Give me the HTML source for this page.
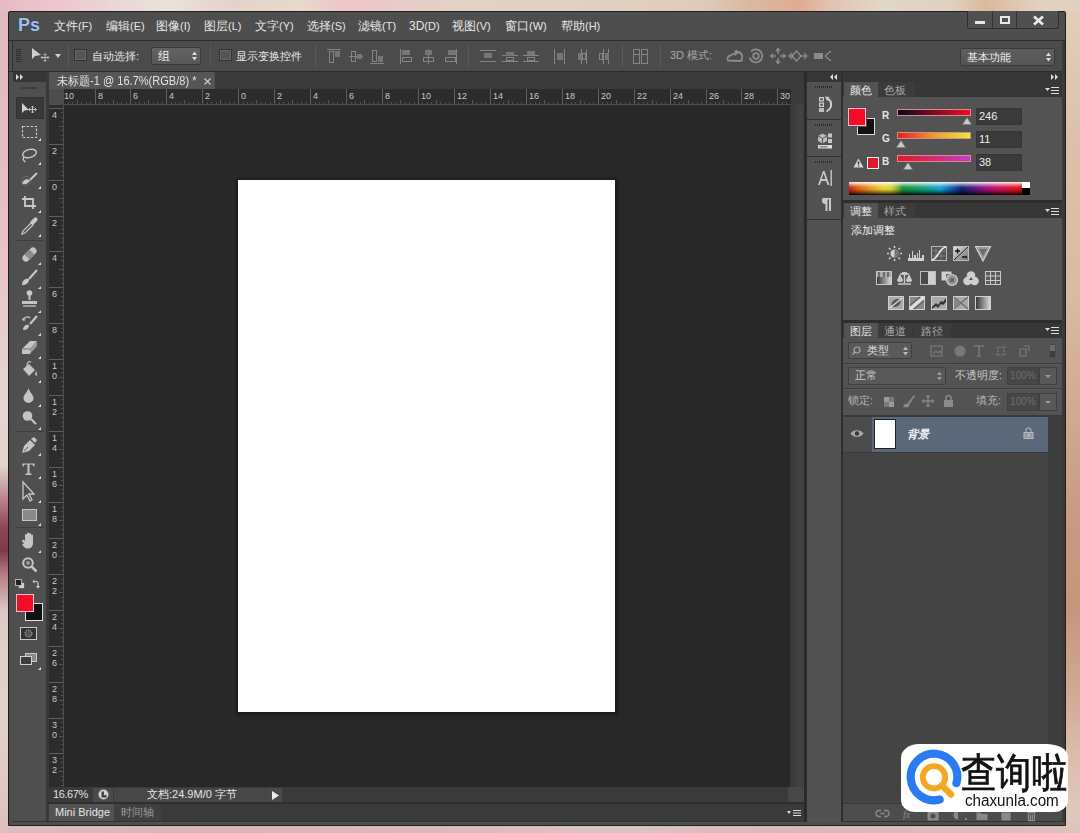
<!DOCTYPE html>
<html><head><meta charset="utf-8">
<style>
*{margin:0;padding:0;box-sizing:border-box}
html,body{width:1080px;height:833px;overflow:hidden}
body{position:relative;font-family:"Liberation Sans",sans-serif;font-size:11px;color:#ddd;
background:linear-gradient(90deg,#e6bcc4 0px,#efc6cf 60px,#e9d6d6 110px,#ece2da 170px,#e5d2cb 230px,#e6dacb 300px,#eec4ca 350px,#e9ccc8 400px,#e2d3c6 470px,#e1d0c2 600px,#dfcbbb 700px,#d9b9a2 750px,#e0ab93 800px,#e2c3b2 830px,#e2d6c6 880px,#e0d2c2 950px,#dcb99b 985px,#e2d2c2 1040px,#e0d0c0 1080px)}
.a{position:absolute}
.t{position:absolute;white-space:nowrap;line-height:1}
svg{position:absolute;overflow:visible}
#win{left:8px;top:11px;width:1058px;height:815px;background:#4e4e4e;border:1px solid #1f1f1f;border-radius:2px 2px 0 0}
.menu{top:20px;font-size:12px;color:#e6e6e6}
.sep{position:absolute;width:1px;background:#383838;border-right:1px solid #5a5a5a}
#hr i{position:absolute;width:1px;background:#5e5e5e}
#hr b{position:absolute;top:3px;font-weight:normal;font-size:9px;color:#c8c8c8;line-height:9px}
#vr i{position:absolute;height:1px;background:#5e5e5e}
#vr b{position:absolute;left:2px;font-weight:normal;font-size:9px;color:#c8c8c8;line-height:10px;text-align:center;width:7px}
.tool{position:absolute;left:21px;width:16px;height:16px}
.corner{position:absolute;width:0;height:0;border-left:3px solid transparent;border-bottom:3px solid #cfcfcf}
.grip{position:absolute;height:2px;background:repeating-linear-gradient(90deg,#2e2e2e 0 1px,transparent 1px 2px)}
.ptab{position:absolute;height:15px;font-size:12px;line-height:15px;text-align:center;color:#bdbdbd}
.pmenu{position:absolute;width:14px;height:8px}
.inp{position:absolute;background:#3a3a3a;border:1px solid #353535}
</style></head><body>
<div class="a" style="left:0;top:11px;width:8px;height:822px;background:linear-gradient(180deg,#e4b9c1 0px,#e6bcc3 140px,#e8c3c8 260px,#e6cfcf 330px,#e4d6d0 400px,#e2d4cc 455px,#b88088 490px,#8e4856 515px,#7e3a48 540px,#b27a80 562px,#dcc8c4 600px,#e0d0c8 640px,#e2d2ca 700px,#e0c8c2 780px,#dcbcbc 833px)"></div>
<div class="a" style="left:1066px;top:11px;width:14px;height:822px;background:linear-gradient(180deg,#e2cebb 0px,#dcc2aa 120px,#d9bba3 280px,#d0aa92 400px,#c69a80 520px,#c6967c 600px,#d2ac96 690px,#dbbca8 740px,#e0c8bf 800px,#ddc0b8 833px)"></div>
<div class="a" style="left:8px;top:826px;width:1058px;height:7px;background:linear-gradient(90deg,#dcbcbc 0px,#d9b5b5 200px,#dcb8b8 400px,#dcc4c4 600px,#d8b8b8 800px,#dcc0bc 1058px)"></div>
<div id="win" class="a"></div>

<!-- menu bar -->
<div class="a" style="left:9px;top:40px;width:1056px;height:1px;background:#2c2c2c"></div>
<div class="t" style="left:18px;top:16px;font-size:18px;font-weight:bold;color:#a3bfe3;text-shadow:0 0 1.5px #23406a,0 0 1px #23406a">Ps</div>
<div class="t menu" style="left:54px">文件<span style="font-size:11px">(F)</span></div>
<div class="t menu" style="left:106px">编辑<span style="font-size:11px">(E)</span></div>
<div class="t menu" style="left:156px">图像<span style="font-size:11px">(I)</span></div>
<div class="t menu" style="left:204px">图层<span style="font-size:11px">(L)</span></div>
<div class="t menu" style="left:255px">文字<span style="font-size:11px">(Y)</span></div>
<div class="t menu" style="left:307px">选择<span style="font-size:11px">(S)</span></div>
<div class="t menu" style="left:358px">滤镜<span style="font-size:11px">(T)</span></div>
<div class="t menu" style="left:409px">3D<span style="font-size:11px">(D)</span></div>
<div class="t menu" style="left:452px">视图<span style="font-size:11px">(V)</span></div>
<div class="t menu" style="left:505px">窗口<span style="font-size:11px">(W)</span></div>
<div class="t menu" style="left:561px">帮助<span style="font-size:11px">(H)</span></div>

<!-- window buttons -->
<div class="a" style="left:967px;top:11px;width:92px;height:18px;background:#505050;border:1px solid #2e2e2e;border-top:none;border-radius:0 0 3px 3px"></div>
<div class="a" style="left:992px;top:11px;width:1px;height:17px;background:#333"></div>
<div class="a" style="left:1016px;top:11px;width:1px;height:17px;background:#333"></div>
<div class="a" style="left:975px;top:21px;width:10px;height:3px;background:#e8e8e8"></div>
<div class="a" style="left:1000px;top:16px;width:10px;height:8px;border:2px solid #e8e8e8;border-top-width:2px"></div>
<svg style="left:1033px;top:16px" width="11" height="9"><path d="M1 0.5L10 8.5M10 0.5L1 8.5" stroke="#eaeaea" stroke-width="2.6"/></svg>

<!-- options bar -->
<div class="a" style="left:12px;top:41px;width:1051px;height:30px;background:#4b4b4b;border-left:1px solid #333"></div>
<div class="a" style="left:9px;top:71px;width:1056px;height:1px;background:#2a2a2a"></div>
<div class="a" style="left:16px;top:49px;width:5px;height:14px;background:repeating-linear-gradient(180deg,#303030 0 1px,transparent 1px 2px)"></div>
<svg style="left:31px;top:47px" width="20" height="18">
<path d="M1 1 L1 12 L4 9 L10 8 Z" fill="#cfcfcf"/>
<path d="M10.5 10.5h7M14 7v7" stroke="#bdbdbd" stroke-width="1"/><path d="M12.5 8l1.5-1.5 1.5 1.5M12.5 13l1.5 1.5 1.5-1.5M11.5 9l-1.5 1.5 1.5 1.5M16.5 9l1.5 1.5-1.5 1.5" stroke="#bdbdbd" stroke-width="0.9" fill="none"/>
</svg>
<svg style="left:55px;top:54px" width="7" height="5"><path d="M0 0h6l-3 4z" fill="#d0d0d0"/></svg>
<div class="sep" style="left:68px;top:45px;height:21px"></div>
<div class="a" style="left:74px;top:49px;width:13px;height:12px;background:#555;border:1px solid #333;box-shadow:inset 0 0 0 1px #666"></div>
<div class="t" style="left:92px;top:51px;color:#e6e6e6">自动选择:</div>
<div class="a" style="left:151px;top:47px;width:50px;height:18px;background:linear-gradient(#636363,#575757);border:1px solid #3a3a3a;border-radius:2px"></div>
<div class="t" style="left:158px;top:50px;font-size:12px;color:#f0f0f0">组</div>
<svg style="left:192px;top:51px" width="5" height="10"><path d="M0 4l2.5-3.5L5 4zM0 6l2.5 3.5L5 6z" fill="#ddd"/></svg>
<div class="sep" style="left:210px;top:45px;height:21px"></div>
<div class="a" style="left:219px;top:49px;width:13px;height:12px;background:#555;border:1px solid #333;box-shadow:inset 0 0 0 1px #666"></div>
<div class="t" style="left:236px;top:51px;color:#e6e6e6">显示变换控件</div>
<div class="sep" style="left:315px;top:45px;height:21px"></div>

<svg style="left:327px;top:49px" width="320" height="15" fill="none" stroke="#858585" stroke-width="1">
<!-- align top/vcenter/bottom -->
<g><path d="M0 0.5h14"/><rect x="2.5" y="2.5" width="4" height="11"/><rect x="8" y="2" width="5" height="6" fill="#767676" stroke="none"/></g>
<g transform="translate(22,0)"><path d="M0 7.5h14"/><rect x="2.5" y="2.5" width="4" height="10"/><rect x="8" y="5" width="5" height="5" fill="#767676" stroke="none"/></g>
<g transform="translate(43,0)"><path d="M0 14.5h14"/><rect x="2.5" y="1.5" width="4" height="11"/><rect x="8" y="7" width="5" height="6" fill="#767676" stroke="none"/></g>
<g transform="translate(73,0)"><path d="M0.5 0v15"/><rect x="2" y="1" width="8" height="5" fill="#767676" stroke="none"/><rect x="2.5" y="8.5" width="9" height="4"/></g>
<g transform="translate(95,0)"><path d="M6.5 0v15"/><rect x="3" y="1" width="7" height="5" fill="#767676" stroke="none"/><rect x="1.5" y="8.5" width="10" height="4"/></g>
<g transform="translate(117,0)"><path d="M12.5 0v15"/><rect x="4" y="1" width="8" height="5" fill="#767676" stroke="none"/><rect x="1.5" y="8.5" width="10" height="4"/></g>
</svg>
<div class="sep" style="left:468px;top:45px;height:21px"></div>
<svg style="left:480px;top:49px" width="180" height="15" fill="none" stroke="#858585" stroke-width="1">
<g><path d="M0 1.5h16M0 12.5h16"/><rect x="4" y="4" width="8" height="5" fill="#767676" stroke="none"/></g>
<g transform="translate(22,0)"><path d="M0 6.5h16M0 12.5h16"/><rect x="4" y="3" width="8" height="4" fill="#767676" stroke="none"/><rect x="4.5" y="8.5" width="7" height="3"/></g>
<g transform="translate(43,0)"><path d="M0 12.5h16M0 6.5h16"/><rect x="4" y="2" width="8" height="4" fill="#767676" stroke="none"/><rect x="4.5" y="8.5" width="7" height="3"/></g>
<g transform="translate(74,0)"><path d="M0.5 0v15M10.5 0v15"/><rect x="3" y="4" width="6" height="7" fill="#767676" stroke="none"/></g>
<g transform="translate(96,0)"><path d="M5.5 0v15M10.5 1v14"/><rect x="2" y="4" width="4" height="7" fill="#767676" stroke="none"/><rect x="6.5" y="4.5" width="3" height="6"/></g>
<g transform="translate(118,0)"><path d="M5.5 0v15M10.5 0v15"/><rect x="7" y="4" width="4" height="7" fill="#767676" stroke="none"/><rect x="1.5" y="4.5" width="3" height="6"/></g>
<g transform="translate(153,0)"><rect x="0.5" y="0.5" width="6" height="14"/><rect x="8.5" y="0.5" width="6" height="14"/><path d="M0 5.5h7M8 5.5h7"/></g>
</svg>
<div class="sep" style="left:622px;top:45px;height:21px"></div>
<div class="sep" style="left:660px;top:45px;height:21px"></div>
<div class="t" style="left:670px;top:50px;font-size:11px;color:#a8a8a8">3D 模式:</div>
<svg style="left:726px;top:47px" width="110" height="18" fill="none" stroke="#8c8c8c" stroke-width="1.8">
<path d="M2 13.5c-1.5-2 0-5 3-5c1-1.5 3-2 4.5-1c1-3 5-3 6 0c1 1 1 3 0 4c1 1 0.5 2.5-1 2.5z"/><circle cx="10.5" cy="5" r="2" fill="#8c8c8c" stroke="none"/>
<path d="M25 4.5a6.5 6.5 0 1 1-1.5 6"/><circle cx="30" cy="9" r="2.8"/>
<path d="M52 2v5M52 11v5M45 9h5M54 9h5" stroke-width="1.5"/><path d="M50 4l2-2.5 2 2.5M50 14l2 2.5 2-2.5M47 7l-2.5 2 2.5 2M57 7l2.5 2-2.5 2" stroke-width="1.3"/>
<path d="M66 9l4.5-5 4.5 5-4.5 5zM63 9h3M75 9h6" stroke-width="1.5"/><path d="M66 6l-3 3 3 3M78 6l3 3-3 3" stroke-width="1.2"/>
<rect x="88" y="6" width="9" height="6" fill="#8c8c8c" stroke="none"/><path d="M99 9l6-5M99 9l6 5" stroke-width="1.5"/>
</svg>
<div class="a" style="left:960px;top:48px;width:95px;height:18px;background:linear-gradient(#5d5d5d,#555);border:1px solid #3a3a3a;border-radius:2px"></div>
<div class="t" style="left:967px;top:52px;color:#eee">基本功能</div>
<svg style="left:1046px;top:52px" width="5" height="10"><path d="M0 4l2.5-3.5L5 4zM0 6l2.5 3.5L5 6z" fill="#ddd"/></svg>

<!-- collapse strips -->
<div class="a" style="left:13px;top:72px;width:33px;height:10px;background:#363636"></div>
<svg style="left:16px;top:74px" width="8" height="6"><path d="M0 0l3 3-3 3zM4 0l3 3-3 3z" fill="#ddd"/></svg>
<div class="a" style="left:807px;top:72px;width:256px;height:10px;background:#363636"></div>
<svg style="left:830px;top:74px" width="8" height="6"><path d="M3 0l-3 3 3 3zM7 0l-3 3 3 3z" fill="#ddd"/></svg>
<svg style="left:1051px;top:74px" width="8" height="6"><path d="M0 0l3 3-3 3zM4 0l3 3-3 3z" fill="#ddd"/></svg>

<!-- tools panel -->
<div class="a" style="left:13px;top:82px;width:33px;height:739px;background:#4f4f4f"></div>
<div class="a" style="left:46px;top:72px;width:3px;height:749px;background:#393939"></div>
<div class="a" style="left:12px;top:821px;width:1050px;height:1px;background:#333"></div>
<div class="grip" style="left:20px;top:87px;width:18px"></div>
<div class="a" style="left:16px;top:97px;width:28px;height:22px;background:#393939;border:1px solid #333"></div>
<svg style="left:0;top:0" width="60" height="700" fill="#c4c4c4" stroke="none">
<!-- separators -->
<path d="M15 240.5h29M15 431.5h29M15 527.5h29" stroke="#3f3f3f" stroke-width="1"/>
<!-- corner triangles -->
<g fill="#d8d8d8">
<path d="M41 138v3h-3z"/><path d="M41 162v3h-3z"/><path d="M41 186v3h-3z"/><path d="M41 210v3h-3z"/><path d="M41 234v3h-3z"/>
<path d="M41 262v3h-3z"/><path d="M41 286v3h-3z"/><path d="M41 310v3h-3z"/><path d="M41 333v3h-3z"/><path d="M41 356v3h-3z"/>
<path d="M41 380v3h-3z"/><path d="M41 404v3h-3z"/><path d="M41 427v3h-3z"/>
<path d="M41 453v3h-3z"/><path d="M41 476v3h-3z"/><path d="M41 500v3h-3z"/><path d="M41 523v3h-3z"/>
<path d="M41 550v3h-3z"/><path d="M41 667v3h-3z"/>
</g>
<!-- move -->
<path d="M22 103v10l2.5-2.5 4.5-0.5z" fill="#d0d0d0"/>
<path d="M29 109.5h7M32.5 106v7" stroke="#c8c8c8" stroke-width="1"/><path d="M31 107.5l1.5-1.5 1.5 1.5M31 111.5l1.5 1.5 1.5-1.5M30 108l-1.5 1.5 1.5 1.5M35 108l1.5 1.5-1.5 1.5" stroke="#c8c8c8" stroke-width="0.9" fill="none"/>
<!-- marquee -->
<rect x="22.5" y="126.5" width="14" height="11" fill="none" stroke="#c8c8c8" stroke-width="1.2" stroke-dasharray="2.5 1.5"/>
<!-- lasso -->
<ellipse cx="29.5" cy="153.5" rx="7" ry="4" fill="none" stroke="#c8c8c8" stroke-width="1.4" transform="rotate(-15 29.5 153.5)"/>
<path d="M24 157c-2 2 0 4 1.5 5" fill="none" stroke="#c8c8c8" stroke-width="1.3"/>
<!-- quick select -->
<path d="M37 173l-7 7" stroke="#c8c8c8" stroke-width="2"/>
<path d="M22 184c1-4 4-6 8-4c-1 3-4 5-8 4z" fill="#c8c8c8"/>
<circle cx="26" cy="181" r="4.5" fill="none" stroke="#888" stroke-width="1" stroke-dasharray="1 1"/>
<!-- crop -->
<path d="M25 196v10h11M22 199h11v10" fill="none" stroke="#c8c8c8" stroke-width="1.8"/>
<!-- eyedropper -->
<path d="M22 234l1-3 8-8 2 2-8 8z" fill="none" stroke="#c8c8c8" stroke-width="1.2"/>
<path d="M30 222l4-4a2 2 0 0 1 3 3l-4 4z" fill="#c8c8c8"/>
<!-- healing -->
<g transform="rotate(-45 29.5 254.5)"><rect x="21" y="251" width="17" height="7" rx="3.5" fill="#c4c4c4"/><rect x="26" y="251" width="7" height="7" fill="#8a8a8a"/></g>
<!-- brush -->
<path d="M37 270l-8 9" stroke="#c8c8c8" stroke-width="2"/>
<path d="M22 285c0-4 3-7 7-6c0 4-3 6-7 6z" fill="#c8c8c8"/>
<!-- stamp -->
<circle cx="29.5" cy="293" r="2.8" fill="#c8c8c8"/><rect x="28.5" y="295" width="2" height="5"/><path d="M22 301h15v3H22z"/><path d="M23 305h13v2H23z" fill="#9a9a9a"/>
<!-- history brush -->
<path d="M37 316l-7 8" stroke="#c8c8c8" stroke-width="2"/>
<path d="M23 330c0-4 3-6 6-5c0 3-2 5-6 5z"/>
<path d="M23 320c1-3 5-4 7-2" fill="none" stroke="#c8c8c8" stroke-width="1.3"/><path d="M22 318l1 3 3-1z"/>
<!-- eraser -->
<path d="M22 349l8-8h7l-7 8v5h-8z" fill="#c4c4c4"/><path d="M30 349h-8" stroke="#777"/><path d="M30 349l7-8v5l-7 8z" fill="#9a9a9a"/>
<!-- paint bucket -->
<path d="M23 369l6-5 6 6-6 6z" fill="#c4c4c4"/><path d="M27 366c0-4 2-5 4-4" fill="none" stroke="#c4c4c4" stroke-width="1.3"/><path d="M36 371c1 2 2 4 0 5c-1-1-1-3 0-5z"/>
<!-- blur -->
<path d="M28.5 388c-1 4-5 7-5 10a5 5 0 0 0 10 0c0-3-4-6-5-10z"/>
<!-- dodge -->
<circle cx="27.5" cy="416" r="4.8"/><path d="M31 419l5 5" stroke="#c4c4c4" stroke-width="2.2"/>
<!-- pen -->
<path d="M22 453l2-7 6-6 5 5-6 6z" fill="#c4c4c4"/><path d="M24 451l4-4" stroke="#555" stroke-width="1"/><path d="M31 439l3-2 3 3-2 3z"/>
<!-- type -->
<path d="M22.5 463.5h12v3h-1l-1-2h-3v9h2v1.5h-6V473.5h2v-9h-3l-1 2h-1z"/>
<!-- path select -->
<path d="M23 482v17l4-4 3 6 2-1-3-6h5z" fill="none" stroke="#c8c8c8" stroke-width="1.3"/>
<!-- rectangle -->
<rect x="22.5" y="509.5" width="14" height="11" fill="#8a8a8a" stroke="#c4c4c4"/>
<!-- hand -->
<path d="M24 544l-2-3c0-1 1-1.5 2-1l1 1v-6a1 1 0 0 1 2 0v5v-6.5a1 1 0 0 1 2 0v6.5v-6a1 1 0 0 1 2 0v6.5v-5a1 1 0 0 1 2 0v7c0 4-2 6-5 6s-4-1-6-4.5z"/>
<!-- zoom -->
<circle cx="28" cy="563" r="4.8" fill="none" stroke="#c4c4c4" stroke-width="2"/><circle cx="28" cy="563" r="2" fill="#9a9a9a"/><path d="M31.5 566.5l5 5" stroke="#c4c4c4" stroke-width="2.5"/>
<!-- small swatches -->
<rect x="18.5" y="582.5" width="6" height="6" fill="#cfcfcf" stroke="#555" stroke-width="0.8"/><rect x="15.5" y="579.5" width="6" height="6" fill="#222" stroke="#bbb" stroke-width="0.9"/>
<g transform="translate(4,0)"><path d="M34 588v-4.5a2 2 0 0 0-2-2h-1.5" fill="none" stroke="#cfcfcf" stroke-width="1.2"/><path d="M30.5 579.5v4l-2-2z" fill="#cfcfcf"/><path d="M32 586l2 2.5 2-2.5z" fill="#cfcfcf"/></g>
<!-- colors -->
<rect x="25.5" y="603.5" width="17" height="17" fill="#111" stroke="#e0e0e0" stroke-width="1"/>
<rect x="16.5" y="594.5" width="17" height="17" fill="#f30b27" stroke="#e8c4c4" stroke-width="1"/>
<!-- quick mask -->
<rect x="20.5" y="627.5" width="16" height="12" fill="#333" stroke="#c8c8c8" stroke-width="1"/><circle cx="28.5" cy="633.5" r="3.5" fill="#555" stroke="#bbb" stroke-width="1" stroke-dasharray="1.2 1"/>
<!-- screen mode -->
<rect x="25.5" y="653.5" width="11" height="8" fill="#8a8a8a" stroke="#c8c8c8" stroke-width="1"/><rect x="20.5" y="656.5" width="11" height="8" fill="#3e3e3e" stroke="#d0d0d0" stroke-width="1"/>
</svg>


<!-- doc tab bar -->
<div class="a" style="left:48px;top:72px;width:757px;height:17px;background:#3a3a3a"></div>
<div class="a" style="left:49px;top:72px;width:166px;height:17px;background:#555;border-radius:2px 2px 0 0"></div>
<div class="t" style="left:57px;top:75px;font-size:12px;color:#e0e0e0;transform:scaleX(0.92);transform-origin:0 0">未标题-1 @ 16.7%(RGB/8) *</div>
<svg style="left:204px;top:78px" width="7" height="7"><path d="M0.5 0.5l6 6M6.5 0.5l-6 6" stroke="#ccc" stroke-width="1.2"/></svg>

<!-- rulers -->
<div class="a" style="left:788px;top:89px;width:16px;height:16px;background:#3b3b3b"></div>
<div id="hr" class="a" style="left:64px;top:89px;width:727px;height:16px;background:#2c2c2c;border-bottom:1px solid #4e4e4e;overflow:hidden"><i style="left:-10px;top:13px;height:3px;background:#4e4e4e"></i><i style="left:-5px;top:0;height:16px"></i><b style="left:0px">10</b><i style="left:-1px;top:13px;height:3px;background:#4e4e4e"></i><i style="left:4px;top:13px;height:3px;background:#4e4e4e"></i><i style="left:8px;top:13px;height:3px;background:#4e4e4e"></i><i style="left:13px;top:11px;height:5px;background:#555"></i><i style="left:17px;top:13px;height:3px;background:#4e4e4e"></i><i style="left:22px;top:13px;height:3px;background:#4e4e4e"></i><i style="left:26px;top:13px;height:3px;background:#4e4e4e"></i><i style="left:31px;top:0;height:16px"></i><b style="left:34px">8</b><i style="left:35px;top:13px;height:3px;background:#4e4e4e"></i><i style="left:40px;top:13px;height:3px;background:#4e4e4e"></i><i style="left:44px;top:13px;height:3px;background:#4e4e4e"></i><i style="left:49px;top:11px;height:5px;background:#555"></i><i style="left:53px;top:13px;height:3px;background:#4e4e4e"></i><i style="left:57px;top:13px;height:3px;background:#4e4e4e"></i><i style="left:62px;top:13px;height:3px;background:#4e4e4e"></i><i style="left:66px;top:0;height:16px"></i><b style="left:69px">6</b><i style="left:71px;top:13px;height:3px;background:#4e4e4e"></i><i style="left:75px;top:13px;height:3px;background:#4e4e4e"></i><i style="left:80px;top:13px;height:3px;background:#4e4e4e"></i><i style="left:84px;top:11px;height:5px;background:#555"></i><i style="left:89px;top:13px;height:3px;background:#4e4e4e"></i><i style="left:93px;top:13px;height:3px;background:#4e4e4e"></i><i style="left:98px;top:13px;height:3px;background:#4e4e4e"></i><i style="left:102px;top:0;height:16px"></i><b style="left:105px">4</b><i style="left:107px;top:13px;height:3px;background:#4e4e4e"></i><i style="left:111px;top:13px;height:3px;background:#4e4e4e"></i><i style="left:116px;top:13px;height:3px;background:#4e4e4e"></i><i style="left:120px;top:11px;height:5px;background:#555"></i><i style="left:125px;top:13px;height:3px;background:#4e4e4e"></i><i style="left:129px;top:13px;height:3px;background:#4e4e4e"></i><i style="left:134px;top:13px;height:3px;background:#4e4e4e"></i><i style="left:138px;top:0;height:16px"></i><b style="left:141px">2</b><i style="left:143px;top:13px;height:3px;background:#4e4e4e"></i><i style="left:147px;top:13px;height:3px;background:#4e4e4e"></i><i style="left:152px;top:13px;height:3px;background:#4e4e4e"></i><i style="left:156px;top:11px;height:5px;background:#555"></i><i style="left:161px;top:13px;height:3px;background:#4e4e4e"></i><i style="left:165px;top:13px;height:3px;background:#4e4e4e"></i><i style="left:170px;top:13px;height:3px;background:#4e4e4e"></i><i style="left:174px;top:0;height:16px"></i><b style="left:177px">0</b><i style="left:179px;top:13px;height:3px;background:#4e4e4e"></i><i style="left:183px;top:13px;height:3px;background:#4e4e4e"></i><i style="left:188px;top:13px;height:3px;background:#4e4e4e"></i><i style="left:192px;top:11px;height:5px;background:#555"></i><i style="left:197px;top:13px;height:3px;background:#4e4e4e"></i><i style="left:201px;top:13px;height:3px;background:#4e4e4e"></i><i style="left:206px;top:13px;height:3px;background:#4e4e4e"></i><i style="left:210px;top:0;height:16px"></i><b style="left:213px">2</b><i style="left:215px;top:13px;height:3px;background:#4e4e4e"></i><i style="left:219px;top:13px;height:3px;background:#4e4e4e"></i><i style="left:224px;top:13px;height:3px;background:#4e4e4e"></i><i style="left:228px;top:11px;height:5px;background:#555"></i><i style="left:233px;top:13px;height:3px;background:#4e4e4e"></i><i style="left:237px;top:13px;height:3px;background:#4e4e4e"></i><i style="left:242px;top:13px;height:3px;background:#4e4e4e"></i><i style="left:246px;top:0;height:16px"></i><b style="left:249px">4</b><i style="left:251px;top:13px;height:3px;background:#4e4e4e"></i><i style="left:255px;top:13px;height:3px;background:#4e4e4e"></i><i style="left:260px;top:13px;height:3px;background:#4e4e4e"></i><i style="left:264px;top:11px;height:5px;background:#555"></i><i style="left:269px;top:13px;height:3px;background:#4e4e4e"></i><i style="left:273px;top:13px;height:3px;background:#4e4e4e"></i><i style="left:278px;top:13px;height:3px;background:#4e4e4e"></i><i style="left:282px;top:0;height:16px"></i><b style="left:285px">6</b><i style="left:287px;top:13px;height:3px;background:#4e4e4e"></i><i style="left:291px;top:13px;height:3px;background:#4e4e4e"></i><i style="left:296px;top:13px;height:3px;background:#4e4e4e"></i><i style="left:300px;top:11px;height:5px;background:#555"></i><i style="left:305px;top:13px;height:3px;background:#4e4e4e"></i><i style="left:309px;top:13px;height:3px;background:#4e4e4e"></i><i style="left:314px;top:13px;height:3px;background:#4e4e4e"></i><i style="left:318px;top:0;height:16px"></i><b style="left:321px">8</b><i style="left:323px;top:13px;height:3px;background:#4e4e4e"></i><i style="left:327px;top:13px;height:3px;background:#4e4e4e"></i><i style="left:332px;top:13px;height:3px;background:#4e4e4e"></i><i style="left:336px;top:11px;height:5px;background:#555"></i><i style="left:341px;top:13px;height:3px;background:#4e4e4e"></i><i style="left:345px;top:13px;height:3px;background:#4e4e4e"></i><i style="left:350px;top:13px;height:3px;background:#4e4e4e"></i><i style="left:354px;top:0;height:16px"></i><b style="left:357px">10</b><i style="left:358px;top:13px;height:3px;background:#4e4e4e"></i><i style="left:363px;top:13px;height:3px;background:#4e4e4e"></i><i style="left:367px;top:13px;height:3px;background:#4e4e4e"></i><i style="left:372px;top:11px;height:5px;background:#555"></i><i style="left:376px;top:13px;height:3px;background:#4e4e4e"></i><i style="left:381px;top:13px;height:3px;background:#4e4e4e"></i><i style="left:385px;top:13px;height:3px;background:#4e4e4e"></i><i style="left:390px;top:0;height:16px"></i><b style="left:393px">12</b><i style="left:394px;top:13px;height:3px;background:#4e4e4e"></i><i style="left:399px;top:13px;height:3px;background:#4e4e4e"></i><i style="left:403px;top:13px;height:3px;background:#4e4e4e"></i><i style="left:408px;top:11px;height:5px;background:#555"></i><i style="left:412px;top:13px;height:3px;background:#4e4e4e"></i><i style="left:417px;top:13px;height:3px;background:#4e4e4e"></i><i style="left:421px;top:13px;height:3px;background:#4e4e4e"></i><i style="left:426px;top:0;height:16px"></i><b style="left:429px">14</b><i style="left:430px;top:13px;height:3px;background:#4e4e4e"></i><i style="left:435px;top:13px;height:3px;background:#4e4e4e"></i><i style="left:439px;top:13px;height:3px;background:#4e4e4e"></i><i style="left:444px;top:11px;height:5px;background:#555"></i><i style="left:448px;top:13px;height:3px;background:#4e4e4e"></i><i style="left:453px;top:13px;height:3px;background:#4e4e4e"></i><i style="left:457px;top:13px;height:3px;background:#4e4e4e"></i><i style="left:462px;top:0;height:16px"></i><b style="left:465px">16</b><i style="left:466px;top:13px;height:3px;background:#4e4e4e"></i><i style="left:471px;top:13px;height:3px;background:#4e4e4e"></i><i style="left:475px;top:13px;height:3px;background:#4e4e4e"></i><i style="left:480px;top:11px;height:5px;background:#555"></i><i style="left:484px;top:13px;height:3px;background:#4e4e4e"></i><i style="left:489px;top:13px;height:3px;background:#4e4e4e"></i><i style="left:493px;top:13px;height:3px;background:#4e4e4e"></i><i style="left:498px;top:0;height:16px"></i><b style="left:501px">18</b><i style="left:502px;top:13px;height:3px;background:#4e4e4e"></i><i style="left:507px;top:13px;height:3px;background:#4e4e4e"></i><i style="left:511px;top:13px;height:3px;background:#4e4e4e"></i><i style="left:516px;top:11px;height:5px;background:#555"></i><i style="left:520px;top:13px;height:3px;background:#4e4e4e"></i><i style="left:525px;top:13px;height:3px;background:#4e4e4e"></i><i style="left:529px;top:13px;height:3px;background:#4e4e4e"></i><i style="left:534px;top:0;height:16px"></i><b style="left:537px">20</b><i style="left:538px;top:13px;height:3px;background:#4e4e4e"></i><i style="left:543px;top:13px;height:3px;background:#4e4e4e"></i><i style="left:547px;top:13px;height:3px;background:#4e4e4e"></i><i style="left:552px;top:11px;height:5px;background:#555"></i><i style="left:556px;top:13px;height:3px;background:#4e4e4e"></i><i style="left:561px;top:13px;height:3px;background:#4e4e4e"></i><i style="left:565px;top:13px;height:3px;background:#4e4e4e"></i><i style="left:570px;top:0;height:16px"></i><b style="left:573px">22</b><i style="left:574px;top:13px;height:3px;background:#4e4e4e"></i><i style="left:579px;top:13px;height:3px;background:#4e4e4e"></i><i style="left:583px;top:13px;height:3px;background:#4e4e4e"></i><i style="left:588px;top:11px;height:5px;background:#555"></i><i style="left:592px;top:13px;height:3px;background:#4e4e4e"></i><i style="left:597px;top:13px;height:3px;background:#4e4e4e"></i><i style="left:601px;top:13px;height:3px;background:#4e4e4e"></i><i style="left:606px;top:0;height:16px"></i><b style="left:609px">24</b><i style="left:610px;top:13px;height:3px;background:#4e4e4e"></i><i style="left:615px;top:13px;height:3px;background:#4e4e4e"></i><i style="left:619px;top:13px;height:3px;background:#4e4e4e"></i><i style="left:624px;top:11px;height:5px;background:#555"></i><i style="left:628px;top:13px;height:3px;background:#4e4e4e"></i><i style="left:633px;top:13px;height:3px;background:#4e4e4e"></i><i style="left:637px;top:13px;height:3px;background:#4e4e4e"></i><i style="left:642px;top:0;height:16px"></i><b style="left:645px">26</b><i style="left:646px;top:13px;height:3px;background:#4e4e4e"></i><i style="left:651px;top:13px;height:3px;background:#4e4e4e"></i><i style="left:655px;top:13px;height:3px;background:#4e4e4e"></i><i style="left:659px;top:11px;height:5px;background:#555"></i><i style="left:664px;top:13px;height:3px;background:#4e4e4e"></i><i style="left:668px;top:13px;height:3px;background:#4e4e4e"></i><i style="left:673px;top:13px;height:3px;background:#4e4e4e"></i><i style="left:677px;top:0;height:16px"></i><b style="left:680px">28</b><i style="left:682px;top:13px;height:3px;background:#4e4e4e"></i><i style="left:686px;top:13px;height:3px;background:#4e4e4e"></i><i style="left:691px;top:13px;height:3px;background:#4e4e4e"></i><i style="left:695px;top:11px;height:5px;background:#555"></i><i style="left:700px;top:13px;height:3px;background:#4e4e4e"></i><i style="left:704px;top:13px;height:3px;background:#4e4e4e"></i><i style="left:709px;top:13px;height:3px;background:#4e4e4e"></i><i style="left:713px;top:0;height:16px"></i><b style="left:716px">30</b><i style="left:718px;top:13px;height:3px;background:#4e4e4e"></i><i style="left:722px;top:13px;height:3px;background:#4e4e4e"></i><i style="left:727px;top:13px;height:3px;background:#4e4e4e"></i></div>
<div class="a" style="left:49px;top:89px;width:15px;height:16px;background:#4d4d4d"></div>
<div id="vr" class="a" style="left:49px;top:105px;width:15px;height:682px;background:#2c2c2c;border-right:1px solid #4e4e4e;overflow:hidden"><i style="top:-15px;left:10px;width:5px;background:#555"></i><i style="top:-10px;left:12px;width:3px;background:#4e4e4e"></i><i style="top:-6px;left:12px;width:3px;background:#4e4e4e"></i><i style="top:-2px;left:12px;width:3px;background:#4e4e4e"></i><i style="top:3px;left:0;width:15px"></i><b style="top:5px">4</b><i style="top:7px;left:12px;width:3px;background:#4e4e4e"></i><i style="top:12px;left:12px;width:3px;background:#4e4e4e"></i><i style="top:16px;left:12px;width:3px;background:#4e4e4e"></i><i style="top:21px;left:10px;width:5px;background:#555"></i><i style="top:25px;left:12px;width:3px;background:#4e4e4e"></i><i style="top:30px;left:12px;width:3px;background:#4e4e4e"></i><i style="top:34px;left:12px;width:3px;background:#4e4e4e"></i><i style="top:39px;left:0;width:15px"></i><b style="top:41px">2</b><i style="top:43px;left:12px;width:3px;background:#4e4e4e"></i><i style="top:48px;left:12px;width:3px;background:#4e4e4e"></i><i style="top:52px;left:12px;width:3px;background:#4e4e4e"></i><i style="top:57px;left:10px;width:5px;background:#555"></i><i style="top:61px;left:12px;width:3px;background:#4e4e4e"></i><i style="top:66px;left:12px;width:3px;background:#4e4e4e"></i><i style="top:70px;left:12px;width:3px;background:#4e4e4e"></i><i style="top:75px;left:0;width:15px"></i><b style="top:77px">0</b><i style="top:79px;left:12px;width:3px;background:#4e4e4e"></i><i style="top:84px;left:12px;width:3px;background:#4e4e4e"></i><i style="top:88px;left:12px;width:3px;background:#4e4e4e"></i><i style="top:93px;left:10px;width:5px;background:#555"></i><i style="top:97px;left:12px;width:3px;background:#4e4e4e"></i><i style="top:102px;left:12px;width:3px;background:#4e4e4e"></i><i style="top:106px;left:12px;width:3px;background:#4e4e4e"></i><i style="top:111px;left:0;width:15px"></i><b style="top:113px">2</b><i style="top:115px;left:12px;width:3px;background:#4e4e4e"></i><i style="top:120px;left:12px;width:3px;background:#4e4e4e"></i><i style="top:124px;left:12px;width:3px;background:#4e4e4e"></i><i style="top:128px;left:10px;width:5px;background:#555"></i><i style="top:133px;left:12px;width:3px;background:#4e4e4e"></i><i style="top:137px;left:12px;width:3px;background:#4e4e4e"></i><i style="top:142px;left:12px;width:3px;background:#4e4e4e"></i><i style="top:146px;left:0;width:15px"></i><b style="top:148px">4</b><i style="top:151px;left:12px;width:3px;background:#4e4e4e"></i><i style="top:155px;left:12px;width:3px;background:#4e4e4e"></i><i style="top:160px;left:12px;width:3px;background:#4e4e4e"></i><i style="top:164px;left:10px;width:5px;background:#555"></i><i style="top:169px;left:12px;width:3px;background:#4e4e4e"></i><i style="top:173px;left:12px;width:3px;background:#4e4e4e"></i><i style="top:178px;left:12px;width:3px;background:#4e4e4e"></i><i style="top:182px;left:0;width:15px"></i><b style="top:184px">6</b><i style="top:187px;left:12px;width:3px;background:#4e4e4e"></i><i style="top:191px;left:12px;width:3px;background:#4e4e4e"></i><i style="top:196px;left:12px;width:3px;background:#4e4e4e"></i><i style="top:200px;left:10px;width:5px;background:#555"></i><i style="top:205px;left:12px;width:3px;background:#4e4e4e"></i><i style="top:209px;left:12px;width:3px;background:#4e4e4e"></i><i style="top:214px;left:12px;width:3px;background:#4e4e4e"></i><i style="top:218px;left:0;width:15px"></i><b style="top:220px">8</b><i style="top:223px;left:12px;width:3px;background:#4e4e4e"></i><i style="top:227px;left:12px;width:3px;background:#4e4e4e"></i><i style="top:232px;left:12px;width:3px;background:#4e4e4e"></i><i style="top:236px;left:10px;width:5px;background:#555"></i><i style="top:241px;left:12px;width:3px;background:#4e4e4e"></i><i style="top:245px;left:12px;width:3px;background:#4e4e4e"></i><i style="top:250px;left:12px;width:3px;background:#4e4e4e"></i><i style="top:254px;left:0;width:15px"></i><b style="top:256px">1<br>0</b><i style="top:258px;left:12px;width:3px;background:#4e4e4e"></i><i style="top:263px;left:12px;width:3px;background:#4e4e4e"></i><i style="top:267px;left:12px;width:3px;background:#4e4e4e"></i><i style="top:272px;left:10px;width:5px;background:#555"></i><i style="top:276px;left:12px;width:3px;background:#4e4e4e"></i><i style="top:281px;left:12px;width:3px;background:#4e4e4e"></i><i style="top:285px;left:12px;width:3px;background:#4e4e4e"></i><i style="top:290px;left:0;width:15px"></i><b style="top:292px">1<br>2</b><i style="top:294px;left:12px;width:3px;background:#4e4e4e"></i><i style="top:299px;left:12px;width:3px;background:#4e4e4e"></i><i style="top:303px;left:12px;width:3px;background:#4e4e4e"></i><i style="top:308px;left:10px;width:5px;background:#555"></i><i style="top:312px;left:12px;width:3px;background:#4e4e4e"></i><i style="top:317px;left:12px;width:3px;background:#4e4e4e"></i><i style="top:321px;left:12px;width:3px;background:#4e4e4e"></i><i style="top:326px;left:0;width:15px"></i><b style="top:328px">1<br>4</b><i style="top:330px;left:12px;width:3px;background:#4e4e4e"></i><i style="top:335px;left:12px;width:3px;background:#4e4e4e"></i><i style="top:339px;left:12px;width:3px;background:#4e4e4e"></i><i style="top:344px;left:10px;width:5px;background:#555"></i><i style="top:348px;left:12px;width:3px;background:#4e4e4e"></i><i style="top:353px;left:12px;width:3px;background:#4e4e4e"></i><i style="top:357px;left:12px;width:3px;background:#4e4e4e"></i><i style="top:362px;left:0;width:15px"></i><b style="top:364px">1<br>6</b><i style="top:366px;left:12px;width:3px;background:#4e4e4e"></i><i style="top:371px;left:12px;width:3px;background:#4e4e4e"></i><i style="top:375px;left:12px;width:3px;background:#4e4e4e"></i><i style="top:380px;left:10px;width:5px;background:#555"></i><i style="top:384px;left:12px;width:3px;background:#4e4e4e"></i><i style="top:388px;left:12px;width:3px;background:#4e4e4e"></i><i style="top:393px;left:12px;width:3px;background:#4e4e4e"></i><i style="top:397px;left:0;width:15px"></i><b style="top:399px">1<br>8</b><i style="top:402px;left:12px;width:3px;background:#4e4e4e"></i><i style="top:406px;left:12px;width:3px;background:#4e4e4e"></i><i style="top:411px;left:12px;width:3px;background:#4e4e4e"></i><i style="top:415px;left:10px;width:5px;background:#555"></i><i style="top:420px;left:12px;width:3px;background:#4e4e4e"></i><i style="top:424px;left:12px;width:3px;background:#4e4e4e"></i><i style="top:429px;left:12px;width:3px;background:#4e4e4e"></i><i style="top:433px;left:0;width:15px"></i><b style="top:435px">2<br>0</b><i style="top:438px;left:12px;width:3px;background:#4e4e4e"></i><i style="top:442px;left:12px;width:3px;background:#4e4e4e"></i><i style="top:447px;left:12px;width:3px;background:#4e4e4e"></i><i style="top:451px;left:10px;width:5px;background:#555"></i><i style="top:456px;left:12px;width:3px;background:#4e4e4e"></i><i style="top:460px;left:12px;width:3px;background:#4e4e4e"></i><i style="top:465px;left:12px;width:3px;background:#4e4e4e"></i><i style="top:469px;left:0;width:15px"></i><b style="top:471px">2<br>2</b><i style="top:474px;left:12px;width:3px;background:#4e4e4e"></i><i style="top:478px;left:12px;width:3px;background:#4e4e4e"></i><i style="top:483px;left:12px;width:3px;background:#4e4e4e"></i><i style="top:487px;left:10px;width:5px;background:#555"></i><i style="top:492px;left:12px;width:3px;background:#4e4e4e"></i><i style="top:496px;left:12px;width:3px;background:#4e4e4e"></i><i style="top:501px;left:12px;width:3px;background:#4e4e4e"></i><i style="top:505px;left:0;width:15px"></i><b style="top:507px">2<br>4</b><i style="top:510px;left:12px;width:3px;background:#4e4e4e"></i><i style="top:514px;left:12px;width:3px;background:#4e4e4e"></i><i style="top:518px;left:12px;width:3px;background:#4e4e4e"></i><i style="top:523px;left:10px;width:5px;background:#555"></i><i style="top:527px;left:12px;width:3px;background:#4e4e4e"></i><i style="top:532px;left:12px;width:3px;background:#4e4e4e"></i><i style="top:536px;left:12px;width:3px;background:#4e4e4e"></i><i style="top:541px;left:0;width:15px"></i><b style="top:543px">2<br>6</b><i style="top:545px;left:12px;width:3px;background:#4e4e4e"></i><i style="top:550px;left:12px;width:3px;background:#4e4e4e"></i><i style="top:554px;left:12px;width:3px;background:#4e4e4e"></i><i style="top:559px;left:10px;width:5px;background:#555"></i><i style="top:563px;left:12px;width:3px;background:#4e4e4e"></i><i style="top:568px;left:12px;width:3px;background:#4e4e4e"></i><i style="top:572px;left:12px;width:3px;background:#4e4e4e"></i><i style="top:577px;left:0;width:15px"></i><b style="top:579px">2<br>8</b><i style="top:581px;left:12px;width:3px;background:#4e4e4e"></i><i style="top:586px;left:12px;width:3px;background:#4e4e4e"></i><i style="top:590px;left:12px;width:3px;background:#4e4e4e"></i><i style="top:595px;left:10px;width:5px;background:#555"></i><i style="top:599px;left:12px;width:3px;background:#4e4e4e"></i><i style="top:604px;left:12px;width:3px;background:#4e4e4e"></i><i style="top:608px;left:12px;width:3px;background:#4e4e4e"></i><i style="top:613px;left:0;width:15px"></i><b style="top:615px">3<br>0</b><i style="top:617px;left:12px;width:3px;background:#4e4e4e"></i><i style="top:622px;left:12px;width:3px;background:#4e4e4e"></i><i style="top:626px;left:12px;width:3px;background:#4e4e4e"></i><i style="top:631px;left:10px;width:5px;background:#555"></i><i style="top:635px;left:12px;width:3px;background:#4e4e4e"></i><i style="top:639px;left:12px;width:3px;background:#4e4e4e"></i><i style="top:644px;left:12px;width:3px;background:#4e4e4e"></i><i style="top:648px;left:0;width:15px"></i><b style="top:650px">3<br>2</b><i style="top:653px;left:12px;width:3px;background:#4e4e4e"></i><i style="top:657px;left:12px;width:3px;background:#4e4e4e"></i><i style="top:662px;left:12px;width:3px;background:#4e4e4e"></i><i style="top:666px;left:10px;width:5px;background:#555"></i><i style="top:671px;left:12px;width:3px;background:#4e4e4e"></i><i style="top:675px;left:12px;width:3px;background:#4e4e4e"></i><i style="top:680px;left:12px;width:3px;background:#4e4e4e"></i></div>

<!-- canvas -->
<div class="a" style="left:64px;top:105px;width:724px;height:682px;background:#282828"></div>
<div class="a" style="left:236px;top:178px;width:382px;height:537px;background:#1c1c1c;filter:blur(1px)"></div>
<div class="a" style="left:238px;top:180px;width:377px;height:532px;background:#fff"></div>

<!-- v scrollbar -->
<div class="a" style="left:788px;top:105px;width:16px;height:682px;background:linear-gradient(90deg,#232323 0px,#232323 1px,#363636 2px,#3e3e3e 8px,#444 13px,#3e3e3e 16px)"></div>
<div class="a" style="left:788px;top:787px;width:16px;height:15px;background:#484848"></div>

<!-- status bar -->
<div class="a" style="left:49px;top:787px;width:739px;height:15px;background:#3a3a3a"></div>
<div class="t" style="left:53px;top:789px;font-size:11px;color:#e0e0e0;letter-spacing:-0.4px">16.67%</div>
<div class="a" style="left:93px;top:788px;width:20px;height:14px;background:#4a4a4a"></div>
<svg style="left:98px;top:789px" width="11" height="11"><circle cx="5.5" cy="5.5" r="5" fill="#cfcfcf"/><path d="M3.5 2.5v6h5v-2.5h-2.5v-3.5z" fill="#444"/></svg>
<div class="a" style="left:114px;top:788px;width:155px;height:14px;background:#474747"></div>
<div class="t" style="left:147px;top:789px;font-size:11px;color:#e6e6e6">文档:24.9M/0 字节</div>
<div class="a" style="left:269px;top:788px;width:13px;height:14px;background:#4a4a4a"></div>
<svg style="left:272px;top:791px" width="7" height="9"><path d="M0 0l7 4.5L0 9z" fill="#eee"/></svg>
<div class="a" style="left:48px;top:802px;width:757px;height:2px;background:#2e2e2e"></div>

<!-- mini bridge row -->
<div class="a" style="left:48px;top:804px;width:757px;height:17px;background:#3a3a3a"></div>
<div class="a" style="left:49px;top:804px;width:65px;height:17px;background:#535353"></div>
<div class="t" style="left:55px;top:807px;font-size:11px;color:#e6e6e6">Mini Bridge</div>
<div class="a" style="left:114px;top:804px;width:47px;height:17px;background:#404040"></div>
<div class="t" style="left:121px;top:807px;font-size:11px;color:#9a9a9a">时间轴</div>
<svg style="left:787px;top:809px" width="15" height="8"><path d="M0 2h4l-2 3z" fill="#ddd"/><path d="M6 1.5h8M6 4h8M6 6.5h8" stroke="#ddd" stroke-width="1"/></svg>

<!-- separators / collapsed column -->
<div class="a" style="left:804px;top:72px;width:3px;height:750px;background:#2b2b2b"></div>
<div class="a" style="left:807px;top:82px;width:34px;height:740px;background:#525252"></div>
<div class="a" style="left:807px;top:119px;width:34px;height:1px;background:#333"></div>
<div class="a" style="left:807px;top:156px;width:34px;height:1px;background:#333"></div>
<div class="a" style="left:807px;top:219px;width:34px;height:1px;background:#333"></div>
<div class="grip" style="left:815px;top:86px;width:18px"></div>
<div class="grip" style="left:815px;top:124px;width:18px"></div>
<div class="grip" style="left:815px;top:161px;width:18px"></div>
<svg style="left:807px;top:82px" width="34" height="140" fill="#c8c8c8">
<rect x="12" y="15" width="5" height="4.5" fill="#cfcfcf"/><rect x="13.2" y="16.2" width="2.6" height="2.1" fill="#555"/>
<rect x="12" y="20.5" width="5" height="4.5" fill="#cfcfcf"/><rect x="13.2" y="21.7" width="2.6" height="2.1" fill="#555"/>
<rect x="12" y="26" width="5" height="4" fill="#bdbdbd"/>
<path d="M19.5 29.5c3.5-2 5-5 4.5-8.5c-0.3-2-1.5-3.5-3.5-4" fill="none" stroke="#cfcfcf" stroke-width="2"/><path d="M18 14.5l4.5 0.5-2.5 4z" fill="#cfcfcf"/>
<path d="M11 54l4.5-2.5 4.5 2.5v5l-4.5 2.5-4.5-2.5z" fill="#bdbdbd"/><path d="M11 54l4.5 2.5 4.5-2.5M15.5 56.5v5" stroke="#555" stroke-width="1" fill="none"/>
<rect x="21" y="51.5" width="4" height="4"/><rect x="21" y="57" width="4" height="4"/>
<rect x="11" y="63" width="14" height="3.5" fill="#ddd"/><rect x="12.5" y="64" width="8" height="1.5" fill="#888"/>
<path d="M11 103l5-14h1.5l5 14h-2l-1.3-4h-5l-1.3 4zM14.7 97h3.8l-1.9-5.5z"/>
<rect x="23.5" y="88" width="1.4" height="16"/>
<path d="M16 116h8v13h-2v-11.5h-1.5V129h-2v-7a3 3 0 0 1-3.5-3a3 3 0 0 1 1-3z"/>
</svg>

<div class="a" style="left:841px;top:72px;width:2px;height:750px;background:#2f2f2f"></div>

<!-- right panels -->
<!-- color panel -->
<div class="a" style="left:843px;top:82px;width:220px;height:15px;background:#373737"></div>
<div class="a" style="left:844px;top:82px;width:34px;height:15px;background:#535353"></div>
<div class="t" style="left:850px;top:85px;color:#e8e8e8">颜色</div>
<div class="a" style="left:878px;top:82px;width:37px;height:15px;background:#3c3c3c"></div>
<div class="t" style="left:884px;top:85px;color:#a8a8a8">色板</div>
<svg style="left:1045px;top:86px" width="15" height="9"><path d="M0 2h5l-2.5 3z" fill="#ddd"/><path d="M6 1.5h8M6 4.5h8M6 7.5h8" stroke="#ddd" stroke-width="1"/></svg>
<div class="a" style="left:843px;top:97px;width:220px;height:103px;background:#535353"></div>
<!-- swatches -->
<div class="a" style="left:857px;top:118px;width:18px;height:17px;background:#111;border:1px solid #ddd"></div>
<div class="a" style="left:848px;top:108px;width:18px;height:18px;background:#f50b26;border:1px solid #f0c8c8;box-shadow:0 0 0 1px #5a4a4a"></div>
<div class="t" style="left:882px;top:111px;font-size:10px;font-weight:bold;color:#e6e6e6">R</div>
<div class="t" style="left:882px;top:134px;font-size:10px;font-weight:bold;color:#e6e6e6">G</div>
<div class="t" style="left:882px;top:157px;font-size:10px;font-weight:bold;color:#e6e6e6">B</div>
<div class="a" style="left:897px;top:109px;width:74px;height:7px;background:linear-gradient(90deg,#000b26,#f50b26);border:1px solid #d88;"></div>
<div class="a" style="left:897px;top:132px;width:74px;height:7px;background:linear-gradient(90deg,#e02020,#e8a030 50%,#e8e840);border:1px solid #d88;"></div>
<div class="a" style="left:897px;top:155px;width:74px;height:7px;background:linear-gradient(90deg,#e01a20,#c83cc8);border:1px solid #d88;"></div>
<svg style="left:962px;top:117px" width="10" height="8"><path d="M5 0.5L9.5 7.5H0.5z" fill="#c9c9c9" stroke="#777" stroke-width="0.6"/></svg>
<svg style="left:896px;top:140px" width="10" height="8"><path d="M5 0.5L9.5 7.5H0.5z" fill="#c9c9c9" stroke="#777" stroke-width="0.6"/></svg>
<svg style="left:903px;top:162px" width="10" height="8"><path d="M5 0.5L9.5 7.5H0.5z" fill="#c9c9c9" stroke="#777" stroke-width="0.6"/></svg>
<div class="inp" style="left:976px;top:108px;width:46px;height:17px"></div>
<div class="inp" style="left:976px;top:131px;width:46px;height:17px"></div>
<div class="inp" style="left:976px;top:154px;width:46px;height:17px"></div>
<div class="t" style="left:979px;top:111px;font-size:11px;color:#eee">246</div>
<div class="t" style="left:979px;top:134px;font-size:11px;color:#eee">11</div>
<div class="t" style="left:979px;top:157px;font-size:11px;color:#eee">38</div>
<svg style="left:853px;top:158px" width="11" height="10"><path d="M5.5 0.5L10.5 9.5H0.5z" fill="#d8d8d8"/><path d="M5.5 3.5v3M5.5 7.5v1" stroke="#333" stroke-width="1.4"/></svg>
<div class="a" style="left:867px;top:157px;width:12px;height:12px;background:#e01a2a;border:1px solid #eee"></div>
<div class="a" style="left:849px;top:182px;width:173px;height:13px;background:linear-gradient(180deg,rgba(255,255,255,.95) 0%,rgba(255,255,255,.35) 25%,rgba(255,255,255,0) 45%,rgba(0,0,0,0) 55%,rgba(0,0,0,.45) 80%,rgba(0,0,0,.95) 100%),linear-gradient(90deg,#c81e14 0%,#e45a14 5%,#eba028 13%,#ebd232 20%,#d8d830 24%,#a8b830 27%,#189238 31%,#10a070 42%,#12a2d0 53%,#1060b0 59%,#102070 65%,#4a1a7a 71%,#a01080 79%,#d0105a 88%,#e01020 96%,#d01010 100%)"></div>
<div class="a" style="left:1022px;top:182px;width:8px;height:6px;background:#fff"></div>
<div class="a" style="left:1022px;top:188px;width:8px;height:7px;background:#000"></div>
<div class="a" style="left:843px;top:200px;width:220px;height:3px;background:#2e2e2e"></div>

<!-- adjustments panel -->
<div class="a" style="left:843px;top:203px;width:220px;height:15px;background:#373737"></div>
<div class="a" style="left:844px;top:203px;width:34px;height:15px;background:#535353"></div>
<div class="t" style="left:850px;top:206px;color:#e8e8e8">调整</div>
<div class="a" style="left:878px;top:203px;width:37px;height:15px;background:#3c3c3c"></div>
<div class="t" style="left:884px;top:206px;color:#a8a8a8">样式</div>
<svg style="left:1045px;top:207px" width="15" height="9"><path d="M0 2h5l-2.5 3z" fill="#ddd"/><path d="M6 1.5h8M6 4.5h8M6 7.5h8" stroke="#ddd" stroke-width="1"/></svg>
<div class="a" style="left:843px;top:218px;width:220px;height:102px;background:#535353"></div>
<div class="t" style="left:851px;top:225px;color:#eee">添加调整</div>
<svg style="left:870px;top:240px" width="140" height="75">
<defs>
<linearGradient id="gg" x1="0" y1="0" x2="1" y2="1"><stop offset="0" stop-color="#e8e8e8"/><stop offset="1" stop-color="#6a6a6a"/></linearGradient>
<linearGradient id="gh" x1="0" y1="0" x2="1" y2="0"><stop offset="0" stop-color="#333"/><stop offset="1" stop-color="#ddd"/></linearGradient>
</defs>
<!-- row1 y 246-261 => local 6-21 -->
<g transform="translate(16,6)">
<circle cx="8.5" cy="7.5" r="4" fill="#cfcfcf"/><path d="M8.5 7.5 m0 -4 a4 4 0 0 1 0 8z" fill="#777"/>
<g stroke="#cfcfcf" stroke-width="1.6"><path d="M8.5 0v2M8.5 13v2M1 7.5h2M14 7.5h2M3 2l1.5 1.5M12.5 11.5L14 13M3 13l1.5-1.5M12.5 3.5L14 2"/></g>
</g>
<g transform="translate(38,6)" fill="#cfcfcf">
<path d="M0 15V12h1V8h1v4h2V5h1v7h1V9h2v3h1V7h1v5h1V4h1v8h2V9h2v6z"/>
</g>
<g transform="translate(61,6)">
<rect x="0.5" y="0.5" width="15" height="14" fill="none" stroke="#bdbdbd"/><path d="M0 5h16M0 10h16M5 0v15M10 0v15" stroke="#8a8a8a" stroke-width="0.8"/><path d="M1 14C7 13 8 2 15 1" stroke="#eee" stroke-width="1.6" fill="none"/>
</g>
<g transform="translate(83,6)">
<rect x="0.5" y="0.5" width="15" height="14" fill="url(#gg)" stroke="#bdbdbd"/><path d="M1 14L15 1" stroke="#222" stroke-width="1"/><path d="M2 5h5M4.5 2.5v5M9 11h5" stroke="#111" stroke-width="1.3"/>
</g>
<g transform="translate(105,6)">
<path d="M0.5 0.5h15L8 15z" fill="#9a9a9a" stroke="#d0d0d0" stroke-width="1.2"/><path d="M4 3h8L8 10z" fill="#6c6c6c"/>
</g>
<!-- row2 y 271-285 local 31-45 -->
<g transform="translate(6,31)">
<rect x="0.5" y="0.5" width="15" height="13" fill="url(#gh)" stroke="#c8c8c8"/><rect x="1" y="1" width="14" height="5" fill="#aaa"/><path d="M3 1v5M8 1v5M12 1v5" stroke="#444" stroke-width="1.2"/>
</g>
<g transform="translate(27,31)" fill="#c8c8c8">
<path d="M7.5 1v11M3 3h9M1 13h13" stroke="#c8c8c8" stroke-width="1.4"/><path d="M0 9l3-6 3 6a3 2 0 0 1-6 0z"/><path d="M9 9l3-6 3 6a3 2 0 0 1-6 0z"/><path d="M5 1h5v3H5z"/>
</g>
<g transform="translate(50,31)">
<rect x="0.5" y="0.5" width="15" height="13" fill="#cfcfcf" stroke="#bdbdbd"/><rect x="1" y="1" width="7" height="12" fill="#4a4a4a"/>
</g>
<g transform="translate(71,31)">
<rect x="0.5" y="0.5" width="10" height="9" fill="#cfcfcf"/><rect x="5" y="3" width="5" height="6" fill="#777"/><circle cx="11" cy="9" r="5.5" fill="#9a9a9a" stroke="#cfcfcf" stroke-width="1.2"/><circle cx="11" cy="9" r="2.5" fill="#6a6a6a"/>
</g>
<g transform="translate(93,31)" fill="#cfcfcf">
<circle cx="8" cy="4.5" r="4.3"/><circle cx="4.5" cy="10" r="4.3"/><circle cx="11.5" cy="10" r="4.3"/><path d="M8 6L6 9h4z" fill="#555"/>
</g>
<g transform="translate(115,31)">
<rect x="0.5" y="0.5" width="15" height="13" fill="#5a5a5a" stroke="#c8c8c8"/><path d="M0 5h16M0 9.5h16M5.5 0v14M10.5 0v14" stroke="#c8c8c8" stroke-width="1"/>
</g>
<!-- row3 y 296-309 local 56-69 -->
<g transform="translate(18,56)">
<rect x="0.5" y="0.5" width="15" height="13" fill="#aaa" stroke="#d0d0d0"/><ellipse cx="8" cy="7" rx="5" ry="3.5" transform="rotate(-35 8 7)" fill="#555"/><path d="M2 12L14 2" stroke="#ddd" stroke-width="1.2"/>
</g>
<g transform="translate(39,56)">
<rect x="0.5" y="0.5" width="15" height="13" fill="#8a8a8a" stroke="#d0d0d0"/><path d="M1 13L15 1" stroke="#e0e0e0" stroke-width="3"/><path d="M1 9L11 1M5 13L15 5" stroke="#666" stroke-width="1.5"/>
</g>
<g transform="translate(61,56)">
<rect x="0.5" y="0.5" width="15" height="13" fill="#aaa" stroke="#d0d0d0"/><path d="M1 11L5 7L7 9L10 5L12 6L15 2V6L12 9L10 8L7 12L5 10L1 13z" fill="#333"/>
</g>
<g transform="translate(83,56)">
<rect x="0.5" y="0.5" width="15" height="13" fill="#aaa" stroke="#d0d0d0"/><path d="M1 1L8 7L15 1M1 13L8 7L15 13" fill="none" stroke="#666" stroke-width="1.2"/><path d="M1 1L8 7L1 13z" fill="#888"/>
</g>
<g transform="translate(105,56)">
<rect x="0.5" y="0.5" width="15" height="13" fill="url(#gh)" stroke="#d0d0d0"/>
</g>
</svg>

<div class="a" style="left:843px;top:320px;width:220px;height:3px;background:#2e2e2e"></div>

<!-- layers panel -->
<div class="a" style="left:843px;top:323px;width:220px;height:15px;background:#373737"></div>
<div class="a" style="left:844px;top:323px;width:34px;height:15px;background:#535353"></div>
<div class="t" style="left:850px;top:326px;color:#e8e8e8">图层</div>
<div class="a" style="left:878px;top:323px;width:34px;height:15px;background:#3c3c3c"></div>
<div class="t" style="left:884px;top:326px;color:#a8a8a8">通道</div>
<div class="a" style="left:913px;top:323px;width:38px;height:15px;background:#3c3c3c"></div>
<div class="t" style="left:921px;top:326px;color:#a8a8a8">路径</div>
<svg style="left:1045px;top:326px" width="15" height="9"><path d="M0 2h5l-2.5 3z" fill="#ddd"/><path d="M6 1.5h8M6 4.5h8M6 7.5h8" stroke="#ddd" stroke-width="1"/></svg>
<div class="a" style="left:843px;top:338px;width:220px;height:465px;background:#535353"></div>
<!-- filter row -->
<div class="a" style="left:848px;top:342px;width:64px;height:17px;background:#5a5a5a;border:1px solid #404040;border-radius:2px"></div>
<svg style="left:852px;top:346px" width="9" height="9"><circle cx="5" cy="4" r="3" fill="none" stroke="#aaa" stroke-width="1.2"/><path d="M3 6L0.5 8.5" stroke="#aaa" stroke-width="1.3"/></svg>
<div class="t" style="left:867px;top:345px;color:#ddd">类型</div>
<svg style="left:903px;top:346px" width="5" height="10"><path d="M0 4l2.5-3.5L5 4zM0 6l2.5 3.5L5 6z" fill="#bbb"/></svg>
<svg style="left:930px;top:343px" width="130" height="16" fill="none" stroke="#787878" stroke-width="1.2">
<rect x="1" y="3" width="11" height="10"/><path d="M3 11l3-3 2 2 2-2 2 3" />
<circle cx="30" cy="8" r="5" fill="#787878"/>
<path d="M44 3h10M49 3v10M47 13h4" stroke-width="1.6"/>
<path d="M66 4h10M66 12h10M68 4v8M74 4v8" stroke-dasharray="2 1"/>
<path d="M90 6h6v7h-6zM94 3h5v5" />
<rect x="119" y="1" width="7" height="14" fill="#3e3e3e" stroke="#555"/><rect x="120" y="2" width="5" height="6" fill="#6a6a6a" stroke="none"/>
</svg>
<div class="a" style="left:843px;top:363px;width:220px;height:1px;background:#3c3c3c;border-bottom:1px solid #595959;height:2px"></div>
<!-- blend row -->
<div class="a" style="left:848px;top:367px;width:98px;height:18px;background:#585858;border:1px solid #404040;border-radius:2px"></div>
<div class="t" style="left:855px;top:370px;color:#ccc">正常</div>
<svg style="left:937px;top:371px" width="5" height="10"><path d="M0 4l2.5-3.5L5 4zM0 6l2.5 3.5L5 6z" fill="#999"/></svg>
<div class="t" style="left:955px;top:370px;color:#c6c6c6">不透明度:</div>
<div class="a" style="left:1007px;top:367px;width:32px;height:18px;background:#474747;border:1px solid #404040"></div>
<div class="t" style="left:1010px;top:371px;font-size:10px;color:#6e6e6e">100%</div>
<div class="a" style="left:1039px;top:367px;width:18px;height:18px;background:#585858;border:1px solid #404040"></div>
<svg style="left:1045px;top:375px" width="6" height="4"><path d="M0 0h6l-3 3z" fill="#999"/></svg>
<div class="a" style="left:843px;top:388px;width:220px;height:1px;background:#3c3c3c;border-bottom:1px solid #595959;height:2px"></div>
<!-- lock row -->
<div class="t" style="left:848px;top:395px;color:#b8b8b8">锁定:</div>
<svg style="left:883px;top:393px" width="75" height="16" fill="#8a8a8a">
<rect x="1" y="4" width="10" height="10" fill="#7a7a7a"/><rect x="1" y="4" width="5" height="5" fill="#999"/><rect x="6" y="9" width="5" height="5" fill="#999"/>
<path d="M20 14c1-3 3-4 4-3l7-9 1 1-6 9c1 1 0 3-6 2z"/>
<path d="M45 2v12M39 8h12" stroke="#8a8a8a" stroke-width="1.3"/><path d="M43 4l2-2 2 2M43 12l2 2 2-2M41 6l-2 2 2 2M49 6l2 2-2 2" stroke="#8a8a8a" fill="none"/>
<rect x="61" y="7" width="9" height="7"/><path d="M63 7V5a2.5 2.5 0 0 1 5 0v2" fill="none" stroke="#8a8a8a" stroke-width="1.4"/>
</svg>
<div class="t" style="left:976px;top:395px;color:#b8b8b8">填充:</div>
<div class="a" style="left:1007px;top:393px;width:32px;height:18px;background:#474747;border:1px solid #404040"></div>
<div class="t" style="left:1010px;top:397px;font-size:10px;color:#6e6e6e">100%</div>
<div class="a" style="left:1039px;top:393px;width:18px;height:18px;background:#585858;border:1px solid #404040"></div>
<svg style="left:1045px;top:401px" width="6" height="4"><path d="M0 0h6l-3 3z" fill="#999"/></svg>
<div class="a" style="left:843px;top:415px;width:219px;height:2px;background:#3a3a3a"></div>
<!-- layer list -->
<div class="a" style="left:843px;top:417px;width:205px;height:386px;background:#444"></div>
<div class="a" style="left:1048px;top:417px;width:14px;height:386px;background:#3d3d3d"></div>
<div class="a" style="left:843px;top:417px;width:29px;height:35px;background:#4b4b4b"></div>
<div class="a" style="left:872px;top:417px;width:176px;height:35px;background:#5a6879"></div>
<div class="a" style="left:843px;top:452px;width:205px;height:1px;background:#3a3a3a"></div>
<svg style="left:850px;top:429px" width="14" height="9"><path d="M0.5 4.5C3 0 11 0 13.5 4.5C11 9 3 9 0.5 4.5z" fill="#a8a8a8"/><circle cx="7" cy="4.5" r="2.2" fill="#3a3a3a"/></svg>
<div class="a" style="left:874px;top:419px;width:22px;height:30px;background:#fff;border:1px solid #222"></div>
<div class="t" style="left:907px;top:429px;font-style:italic;font-weight:bold;color:#f4f4f4;font-size:11px">背景</div>
<svg style="left:1023px;top:426px" width="11" height="13"><path d="M3 6.5V4.5a2.5 2.5 0 0 1 5 0v2" fill="none" stroke="#b0b0b0" stroke-width="1.1"/><rect x="1" y="6.5" width="9" height="6" fill="#8f9aa6" stroke="#b8b8b8" stroke-width="1"/><rect x="5" y="8.5" width="1.4" height="2" fill="#e0e0e0"/></svg>
<!-- layers bottom bar -->
<div class="a" style="left:843px;top:803px;width:220px;height:18px;background:#4d4d4d;border-top:1px solid #3a3a3a"></div>
<svg style="left:876px;top:807px" width="170" height="14" fill="none" stroke="#8a8a8a" stroke-width="1.3">
<path d="M5 3.5h-2a3 3 0 0 0 0 6h2M8 3.5h2a3 3 0 0 1 0 6h-2M4.5 6.5h4"/>
<text x="27" y="11" font-family="Liberation Serif" font-style="italic" font-size="10" fill="#8a8a8a" stroke="none">fx</text>
<rect x="51.5" y="4.5" width="11" height="9" fill="#8a8a8a" stroke="none"/><circle cx="57" cy="9" r="2.5" fill="#4d4d4d" stroke="none"/>
<circle cx="82" cy="8" r="4.5" fill="#8a8a8a" stroke="none"/><path d="M82 3.5a4.5 4.5 0 0 1 0 9z" fill="#4d4d4d" stroke="none"/><rect x="89" y="11" width="2" height="2" fill="#8a8a8a" stroke="none"/>
<path d="M100.5 5.5h4l1 1.5h6v6h-11z" fill="#8a8a8a" stroke="none"/>
<rect x="125.5" y="5.5" width="9" height="8" fill="#8a8a8a" stroke="none"/><path d="M128 5l4-3v3" fill="#8a8a8a" stroke="none"/>
<path d="M151.5 5.5h8M152.5 6.5v7h6v-7M154.5 7.5v5M156.5 7.5v5" />
</svg>
<div class="a" style="left:1062px;top:41px;width:3px;height:781px;background:#3a3a3a"></div>


<!-- watermark -->
<div class="a" style="left:901px;top:744px;width:167px;height:68px;background:#fff;border-radius:18px 22px 14px 14px / 14px 12px 12px 12px"></div>
<svg style="left:0;top:0" width="1080" height="833">
<path d="M956.5 783 A23.3 23.3 0 1 0 939.6 799.6" fill="none" stroke="#2a7af2" stroke-width="8.2" stroke-linecap="round"/>
<circle cx="934" cy="777.3" r="11.2" fill="none" stroke="#f5a623" stroke-width="5.8"/>
<path d="M942 785.5L951 794.5" stroke="#f5a623" stroke-width="6.5" stroke-linecap="round"/>
</svg>
<div class="t" style="left:961px;top:750px;font-size:41px;-webkit-text-stroke:0.8px #111;color:#111;line-height:46px;transform:scaleX(0.86);transform-origin:0 0">查询啦</div>
<div class="t" style="left:965px;top:793px;font-size:16px;color:#111;line-height:16px;transform:scaleX(0.95);transform-origin:0 0">chaxunla.com</div>

</body></html>
